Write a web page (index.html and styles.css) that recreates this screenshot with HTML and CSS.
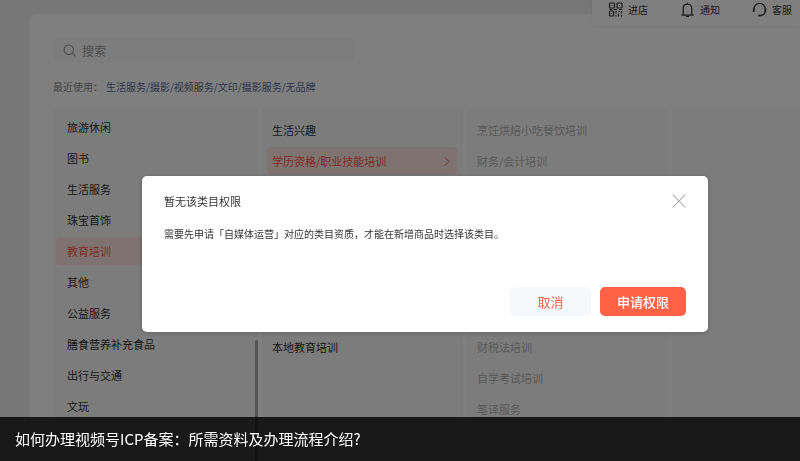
FILE: index.html
```
<!DOCTYPE html>
<html lang="zh-CN">
<head>
    <meta charset="UTF-8">
    <meta name="viewport" content="width=device-width, initial-scale=1.0">
    <title>选择类目</title>
    <link rel="stylesheet" href="styles.css">
</head>
<body>
    <div class="page">
        <nav class="top-nav">
            <a href="#">
                <svg width="15" height="15" viewBox="0 0 15 15" fill="none" stroke="currentColor" stroke-width="1.2">
                    <rect x="1.5" y="1" width="5" height="5" rx=".5"/>
                    <rect x="9" y="1" width="5" height="5" rx=".5"/>
                    <rect x="1.5" y="9" width="4" height="5" rx=".5"/>
                    <path d="M3.5 3.5h1M11 3.5h1M3.2 11.5h.8M1.5 7.5h2.5M5.5 7.5h3.500M11 7.5h3M8 9v2.500M8 13v1.500M10.500 9.500h1.500M13.500 9v2.500M10.500 11.500v3M13.500 13v1.500"/>
                </svg>
                进店
            </a>
            <a href="#">
                <svg width="15" height="15" viewBox="0 0 15 15" fill="none" stroke="currentColor" stroke-width="1.2">
                    <path d="M1.500 13.200h12M3.200 13.200V6.500C3.200 4 5 2.200 7.500 2.200S11.800 4 11.800 6.500v6.700M7.500 2.200V.8M6 14.600h3"/>
                </svg>
                通知
            </a>
            <a href="#">
                <svg width="15" height="15" viewBox="0 0 15 15" fill="none" stroke="currentColor" stroke-width="1.2">
                    <path d="M2 8.500V7a5.600 5.600 0 0 1 11.200 0v1.500c0 2.800-1.800 4.800-4.700 4.900"/>
                    <path d="M1.700 6.500v3.500M13.500 6.500v3.500" stroke-width="1.600"/>
                    <path d="M6.300 13.500h2.400" stroke-width="1.800"/>
                </svg>
                客服
            </a>
        </nav>

        <main class="panel">
            <label class="search">
                <svg width="13" height="13" viewBox="0 0 13 13" fill="none" stroke="currentColor" stroke-width="1.1">
                    <circle cx="5.8" cy="5.8" r="4.8"/>
                    <path d="M9.3 9.3l3 3"/>
                </svg>
                <input type="text" placeholder="搜索" aria-label="搜索">
            </label>

            <p class="recent">最近使用：<a href="#">生活服务/摄影/视频服务/文印/摄影服务/无品牌</a></p>

            <div class="columns">
                <ul class="column first scrollable">
                    <li>旅游休闲</li>
                    <li>图书</li>
                    <li>生活服务</li>
                    <li>珠宝首饰</li>
                    <li class="active">教育培训</li>
                    <li>其他</li>
                    <li>公益服务</li>
                    <li>膳食营养补充食品</li>
                    <li>出行与交通</li>
                    <li>文玩</li>
                </ul>
                <ul class="column">
                    <li>生活兴趣</li>
                    <li class="active">
                        学历资格/职业技能培训
                        <svg width="6" height="9" viewBox="0 0 6 9" fill="none" stroke="currentColor">
                            <path d="M1 .5l4 4-4 4"/>
                        </svg>
                    </li>
                    <li class="group-start">本地教育培训</li>
                </ul>
                <ul class="column disabled">
                    <li>烹饪烘焙小吃餐饮培训</li>
                    <li>财务/会计培训</li>
                    <li class="group-start">财税法培训</li>
                    <li>自学考试培训</li>
                    <li>笔译服务</li>
                </ul>
                <ul class="column"></ul>
            </div>
        </main>
    </div>

    <div class="overlay">
        <div class="modal" role="dialog" aria-labelledby="modal-title">
            <div class="modal-header">
                <h2 id="modal-title">暂无该类目权限</h2>
                <button type="button" class="close" aria-label="关闭">
                    <svg width="14" height="14" viewBox="0 0 14 14" fill="none" stroke="currentColor" stroke-width="1.2">
                        <path d="M.7.7l12.6 12.6M13.3.7L.7 13.3"/>
                    </svg>
                </button>
            </div>
            <p>需要先申请「自媒体运营」对应的类目资质，才能在新增商品时选择该类目。</p>
            <div class="modal-footer">
                <button type="button" class="btn">取消</button>
                <button type="button" class="btn primary">申请权限</button>
            </div>
        </div>
    </div>

    <div class="caption">如何办理视频号ICP备案：所需资料及办理流程介绍?</div>
</body>
</html>
```

FILE: styles.css
```
* {
    margin: 0;
    padding: 0;
    box-sizing: border-box;
}

body {
    font-family: "Noto Sans CJK SC", sans-serif;
    font-size: 11px;
    color: #333;
    overflow: hidden;
}

button, input {
    font-family: inherit;
    border: none;
}

a {
    text-decoration: none;
}

svg {
    flex-shrink: 0;
}

.page {
    height: 100vh;
    padding: 14px 0 0 30px;
    background: #eee;
    display: flex;
}

/* floating shortcuts in the top right corner */
.top-nav {
    position: absolute;
    top: 0;
    right: 0;
    display: flex;
    height: 26px;
    padding-bottom: 8px;
    background: #fff;
    border-radius: 0 0 0 6px;
    box-shadow: 0 1px 3px rgba(0, 0, 0, 0.06);
}

.top-nav a {
    display: flex;
    align-items: center;
    gap: 5px;
    padding-left: 16px;
    padding-right: 16px;
    font-size: 10px;
    color: #333;
}

.top-nav a:last-child {
    padding-right: 8px;
}

.panel {
    flex: 1;
    min-width: 0;
    display: flex;
    flex-direction: column;
    padding: 24px 0 0 23px;
    background: #fff;
    border-radius: 6px 0 0 0;
}

.search {
    display: flex;
    align-items: center;
    gap: 6px;
    width: 302px;
    height: 25px;
    padding: 0 10px;
    background: #fafafa;
    border-radius: 6px;
    color: #999;
}

.search input {
    flex: 1;
    min-width: 0;
    font-size: 12px;
    background: none;
    outline: none;
}

.search input::placeholder {
    color: #999;
}

.recent {
    margin: 16px 0 14px;
    font-size: 10px;
    line-height: 16px;
    color: #888;
}

.recent a {
    margin-left: 3px;
    color: #576b95;
}

.columns {
    flex: 1;
    min-height: 0;
    display: grid;
    grid-template-columns: 205px 201px 201px 1fr;
    gap: 4px;
}

.column {
    display: flex;
    flex-direction: column;
    gap: 3px;
    padding: 7px 6px 0 5px;
    background: #f9f9f9;
    list-style: none;
    overflow: hidden;
}

.column.first {
    padding: 4px 3px 0;
}

.column.first li {
    padding-left: 11px;
}

.column li {
    display: flex;
    flex-shrink: 0;
    align-items: center;
    justify-content: space-between;
    height: 28px;
    padding: 0 7px 0 5px;
}

.column .active {
    background: #fde6e2;
    border-radius: 4px;
    color: #fa5a46;
}

.column .group-start {
    margin-top: 155px;
}

.disabled {
    color: #b2b2b2;
}

.scrollable {
    position: relative;
}

/* scrollbar thumb */
.scrollable::after {
    content: "";
    position: absolute;
    top: 231px;
    right: 0;
    bottom: 0;
    width: 3px;
    border-radius: 2px;
    background: #aaa;
}

.overlay {
    position: fixed;
    inset: 0;
    padding: 176px 92px 0 142px;
    background: rgba(0, 0, 0, 0.5);
}

.modal {
    padding: 16px 22px;
    background: #fff;
    border-radius: 5px;
    box-shadow: 0 1px 5px rgba(0, 0, 0, 0.2);
}

.modal-header {
    display: flex;
    align-items: center;
    justify-content: space-between;
    height: 18px;
}

.modal h2 {
    font-size: 11px;
    font-weight: 400;
}

.close {
    display: flex;
    background: none;
    color: #b2b2b2;
    cursor: pointer;
}

.modal p {
    margin: 16px 0 45px;
    font-size: 10px;
    line-height: 16px;
}

.modal-footer {
    display: flex;
    justify-content: flex-end;
    gap: 9px;
}

.btn {
    width: 81px;
    height: 29px;
    border-radius: 5px;
    background: #f7f8fa;
    color: #e8674f;
    font-size: 13px;
    cursor: pointer;
}

.btn.primary {
    width: 86px;
    background: #ff6146;
    color: #fff;
    font-weight: 500;
}

.caption {
    position: fixed;
    left: 0;
    right: 0;
    bottom: 0;
    padding: 0 15px;
    line-height: 44px;
    font-size: 15px;
    color: #fff;
    background: rgba(0, 0, 0, 0.8);
}
```
